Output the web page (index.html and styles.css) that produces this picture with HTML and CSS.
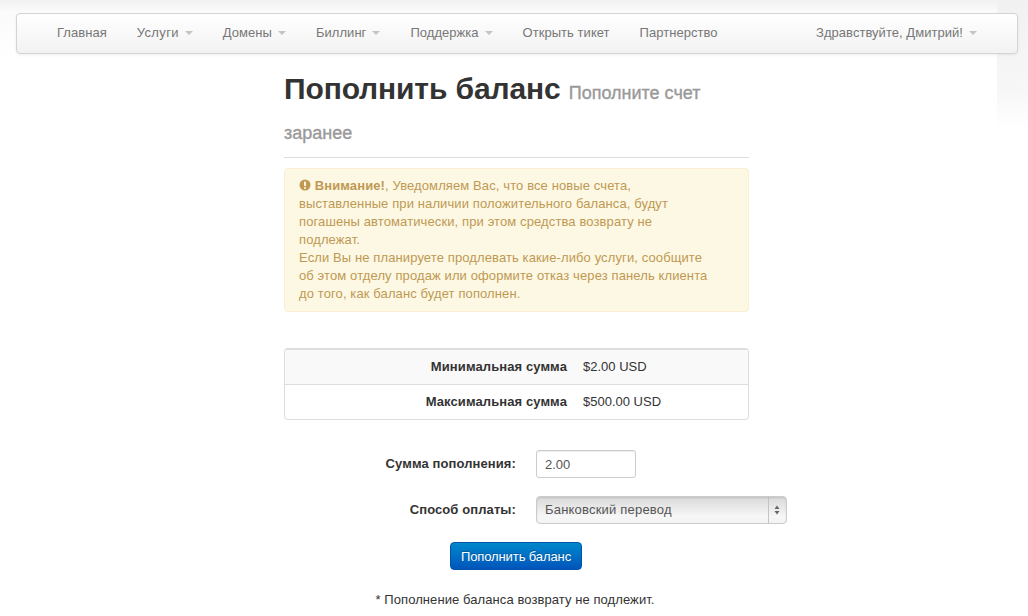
FILE: index.html
```html
<!DOCTYPE html>
<html lang="ru">
<head>
<meta charset="utf-8">
<title>Пополнить баланс</title>
<link rel="stylesheet" href="styles.css">
</head>
<body>
<nav class="navbar">
  <ul class="nav">
    <li><a href="#">Главная</a></li>
    <li><a class="wide" href="#">Услуги<b class="caret"></b></a></li>
    <li><a href="#">Домены<b class="caret"></b></a></li>
    <li><a href="#">Биллинг<b class="caret"></b></a></li>
    <li><a href="#">Поддержка<b class="caret"></b></a></li>
    <li><a href="#">Открыть тикет</a></li>
    <li><a href="#">Партнерство</a></li>
  </ul>
  <ul class="nav">
    <li><a href="#">Здравствуйте, Дмитрий!<b class="caret"></b></a></li>
  </ul>
</nav>
<main class="content">
  <header class="page-header">
    <h1>Пополнить баланс <small>Пополните счет заранее</small></h1>
  </header>
  <div class="alert">
    <svg class="alert-icon" viewBox="0 0 12 12" width="12" height="12" aria-hidden="true"><circle cx="6" cy="6" r="5.5" fill="#c09853"/><rect x="5" y="2.4" width="2" height="4.6" rx=".6" fill="#fcf8e3"/><rect x="5" y="8" width="2" height="1.8" rx=".4" fill="#fcf8e3"/></svg>
    <strong>Внимание!</strong>, Уведомляем Вас, что все новые счета, выставленные при наличии положительного баланса, будут погашены автоматически, при этом средства возврату не подлежат.<br>
    Если Вы не планируете продлевать какие-либо услуги, сообщите об этом отделу продаж или оформите отказ через панель клиента до того, как баланс будет пополнен.
  </div>
  <table class="limits">
    <tr class="shaded"><th>Минимальная сумма</th><td>$2.00 USD</td></tr>
    <tr><th>Максимальная сумма</th><td>$500.00 USD</td></tr>
  </table>
  <form class="form">
    <label class="form-label" for="amount">Сумма пополнения:</label>
    <input class="amount" id="amount" type="text" value="2.00">
    <label class="form-label" for="method">Способ оплаты:</label>
    <div class="select-wrap">
      <select class="select" id="method"><option>Банковский перевод</option></select>
      <svg class="select-arrows" viewBox="0 0 8 12" width="8" height="12" aria-hidden="true"><path d="M4 1.5 6.5 5h-5zM4 10.5 1.5 7h5z" fill="#666"/></svg>
    </div>
    <button class="btn" type="button">Пополнить баланс</button>
  </form>
  <p class="note">* Пополнение баланса возврату не подлежит.</p>
</main>
</body>
</html>
```
FILE: styles.css
```css
html, body { margin: 0; height: 616px; overflow: hidden; }
body {
  position: relative;
  font: 13px/18px "Liberation Sans", Arial, sans-serif;
  color: #333;
  background:
    linear-gradient(to bottom, #f1f1f1 0, #fbfbfb 12px, #fff 60px, #fff 100%);
}
body::after {
  content: "";
  position: absolute;
  top: 0;
  right: 0;
  width: 31px;
  height: 130px;
  background: linear-gradient(to bottom, #f1f1f1, #f7f7f7 70%, #fff);
  z-index: -1;
}
.navbar {
  display: flex;
  justify-content: space-between;
  box-sizing: border-box;
  width: 1002px;
  height: 41px;
  margin: 13px 0 0 16px;
  padding: 0 25px;
  background: linear-gradient(to bottom, #fff, #f2f2f2);
  border: 1px solid #d4d4d4;
  border-radius: 4px;
  box-shadow: 0 1px 3px rgba(0, 0, 0, .07);
}
.nav { display: flex; margin: 0; padding: 0; list-style: none; }
.nav a {
  display: block;
  padding: 10px 15px 9px;
  color: #777;
  letter-spacing: .04px;
  text-decoration: none;
}
.nav a.wide { letter-spacing: .35px; }
.caret {
  display: inline-block;
  margin-left: 6px;
  vertical-align: 2px;
  border-top: 4px solid #c4c4c4;
  border-left: 4px solid transparent;
  border-right: 4px solid transparent;
}
.content { width: 465px; margin-left: 284px; }
.page-header { margin-top: 17px; padding-bottom: 6px; border-bottom: 1px solid #ddd; }
h1 {
  margin: 0;
  font-size: 30px;
  line-height: 36px;
  letter-spacing: -.12px;
  color: #333;
}
small {
  font-size: 18px;
  font-weight: normal;
  letter-spacing: 0;
  color: #999;
  -webkit-text-stroke: .35px #999;
}
.alert {
  box-sizing: border-box;
  margin-top: 10px;
  padding: 8px 35px 8px 14px;
  color: #c09853;
  letter-spacing: .11px;
  background: #fcf8e3;
  border: 1px solid #fbeed5;
  border-radius: 4px;
}
.alert-icon { vertical-align: -1px; }
.limits {
  width: 100%;
  margin-top: 36px;
  border: 1px solid #ddd;
  border-top: 2px solid #ddd;
  border-radius: 4px;
  border-spacing: 0;
  line-height: 18px;
}
.limits th, .limits td { padding: 8px; height: 18px; }
.limits th { width: 274px; text-align: right; letter-spacing: .1px; }
.limits td { text-align: left; }
.limits tr + tr th, .limits tr + tr td { border-top: 1px solid #ddd; }
.shaded th, .shaded td { background: #f9f9f9; }
.form {
  display: grid;
  grid-template-columns: 232px 100px;
  column-gap: 20px;
  row-gap: 18px;
  margin-top: 30px;
  align-items: center;
}
.form-label { text-align: right; font-weight: bold; letter-spacing: .1px; }
.amount {
  box-sizing: border-box;
  width: 100px;
  height: 28px;
  padding: 0 8px;
  font: 13px "Liberation Sans", Arial, sans-serif;
  color: #555;
  background: #fff;
  border: 1px solid #ccc;
  border-radius: 3px;
  box-shadow: inset 0 1px 1px rgba(0, 0, 0, .075);
}
.select-wrap { position: relative; width: 251px; height: 28px; }
.select {
  appearance: none;
  box-sizing: border-box;
  width: 251px;
  height: 28px;
  padding: 0 8px 2px;
  font: 13px "Liberation Sans", Arial, sans-serif;
  letter-spacing: .2px;
  color: #555;
  background: linear-gradient(to right, transparent 231px, #c4c4c4 231px, #c4c4c4 232px, transparent 232px), linear-gradient(to bottom, #d9d9d9, #f7f7f7 75%, #f3f3f3);
  border: 1px solid #ccc;
  border-radius: 4px;
  box-shadow: inset 0 1px 2px rgba(0, 0, 0, .12);
}
.select-arrows { position: absolute; right: 6px; top: 8px; }
.btn {
  grid-column: 1 / 3;
  justify-self: start;
  width: 132px;
  height: 28px;
  margin-left: 166px;
  padding: 0;
  font: 13px "Liberation Sans", Arial, sans-serif;
  letter-spacing: -.1px;
  color: #fff;
  text-shadow: 0 -1px 0 rgba(0, 0, 0, .25);
  background: linear-gradient(to bottom, #0088cc, #0055bb);
  border: 1px solid #0055aa;
  border-radius: 4px;
}
.note { margin: 21px 0 0; text-align: center; width: 462px; letter-spacing: .08px; }
```
